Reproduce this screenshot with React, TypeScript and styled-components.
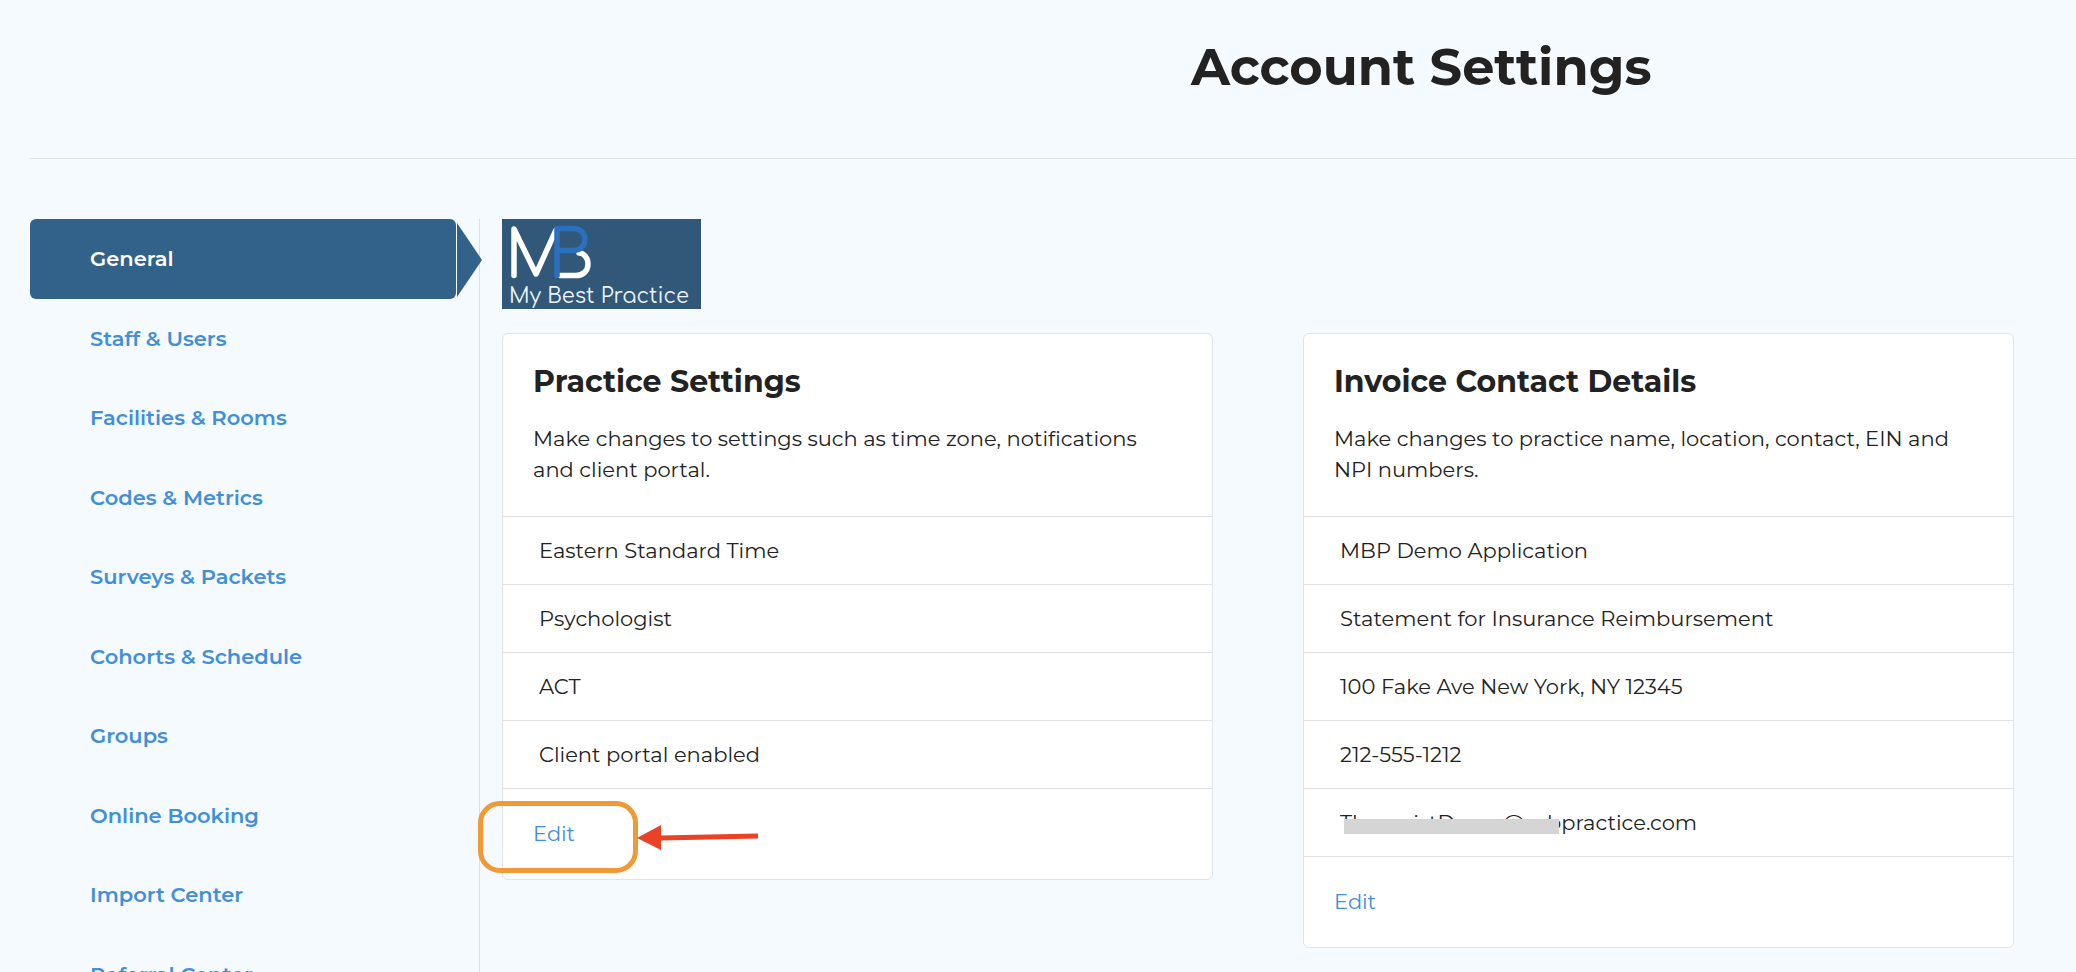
import React from "react";
import styled, { createGlobalStyle } from "styled-components";

const GlobalStyle = createGlobalStyle`
  *, *::before, *::after { box-sizing: border-box; }
  body {
    margin: 0;
    background: #f5faff;
    color: #222;
    font-family: Montserrat, Inter, "Open Sans", sans-serif;
    font-size: 21px;
    line-height: 31px;
  }
`;

const Page = styled.div`
  display: flex;
  flex-direction: column;
  height: 100vh;
  padding-left: 30px;
  overflow: hidden;
`;

const Header = styled.header`
  flex: none;
  padding: 36px 0 60px 36%;
  border-bottom: 1px solid #dee3e8;
  text-align: center;
`;

const PageTitle = styled.h1`
  margin: 0;
  font-size: 51px;
  line-height: 62px;
  font-weight: 700;
`;

const Body = styled.div`
  display: flex;
  flex: 1;
  min-height: 0;
  padding-top: 60px;
`;

const Sidebar = styled.nav`
  flex: none;
  width: 450px;
  padding-right: 23px;
  border-right: 1px solid #d9dfe4;
`;

const NavList = styled.ul`
  display: grid;
  grid-auto-rows: 1fr;
  height: 795px;
  margin: 0;
  padding: 0;
  list-style: none;
`;

const NavItem = styled.li`
  position: relative;
  display: flex;
`;

const NavLink = styled.a<{ $active?: boolean }>`
  display: flex;
  flex: 1;
  align-items: center;
  padding: 0 60px;
  border-radius: 6px;
  background: ${(p) => (p.$active ? "#326289" : "transparent")};
  color: ${(p) => (p.$active ? "#fff" : "#428fd6")};
  font-weight: 600;
  text-decoration: none;
`;

const ActivePointer = styled.svg`
  position: absolute;
  top: 3px;
  left: 100%;
  width: 26px;
  height: 76px;
`;

const Main = styled.main`
  flex: 1;
  min-width: 0;
  padding: 0 62px 24px 22px;
`;

const Logo = styled.svg`
  display: block;
  width: 199px;
  height: 90px;
  margin-bottom: 24px;
`;

const Cards = styled.div`
  display: grid;
  grid-template-columns: 1fr 1fr;
  gap: 90px;
  align-items: start;
`;

const Card = styled.section`
  border: 1px solid #e1e3e5;
  border-radius: 6px;
  background: #fff;
`;

const CardHeader = styled.div`
  padding: 28px 30px 31px;
`;

const CardTitle = styled.h2`
  margin: 0 0 21px;
  font-size: 30px;
  line-height: 40px;
  font-weight: 700;
`;

const CardText = styled.p`
  margin: 0;
`;

const Rows = styled.ul`
  margin: 0;
  padding: 0;
  list-style: none;
`;

const Row = styled.li`
  display: flex;
  align-items: center;
  height: 68px;
  padding: 0 36px;
  border-top: 1px solid #e1e3e5;
`;

const CardFooter = styled.div`
  position: relative;
  height: 91px;
  padding: 29px 30px;
  border-top: 1px solid #e1e3e5;
`;

const EditLink = styled.a`
  color: #428fd6;
  text-decoration: none;
`;

const Redacted = styled.span`
  position: relative;
`;

const RedactionBar = styled.span`
  position: absolute;
  top: 12px;
  left: 4px;
  width: 215px;
  height: 15px;
  background: #d5d5d5;
`;

const Highlight = styled.div`
  position: absolute;
  top: 12px;
  left: -25px;
  width: 160px;
  height: 72px;
  border: 5px solid #f09937;
  border-radius: 22px;
  pointer-events: none;
`;

const Arrow = styled.svg`
  position: absolute;
  top: 34px;
  left: 133px;
  width: 124px;
  height: 28px;
  pointer-events: none;
`;

const navItems = [
  "General",
  "Staff & Users",
  "Facilities & Rooms",
  "Codes & Metrics",
  "Surveys & Packets",
  "Cohorts & Schedule",
  "Groups",
  "Online Booking",
  "Import Center",
  "Referral Center",
];

function PracticeLogo() {
  return (
    <Logo viewBox="0 0 199 90" role="img" aria-label="My Best Practice">
      <rect width="199" height="90" fill="#315879" />
      <g fill="none" strokeLinecap="round" strokeLinejoin="round" strokeWidth="5.5">
        <path d="M12 56.500V10L34 55L54 11" stroke="#fff" />
        <path d="M77 34C82 34 86 39 86 45C86 52 81 56.500 74 56.500H58" stroke="#fff" />
        <path d="M55 56.500V9.500H71C78 9.500 83 14 83 20.500C83 27 78 31.500 71 31.500H57" stroke="#2c6fbc" />
      </g>
      <text x="7" y="84" fill="#eef4f9" fontFamily="Comfortaa, Lato, sans-serif" fontSize="21">
        My Best Practice
      </text>
    </Logo>
  );
}

export default function App() {
  return (
    <>
      <GlobalStyle />
      <Page>
        <Header>
          <PageTitle>Account Settings</PageTitle>
        </Header>
        <Body>
          <Sidebar aria-label="Account settings">
            <NavList>
              {navItems.map((label, i) => (
                <NavItem key={label}>
                  <NavLink href="#" $active={i === 0} aria-current={i === 0 ? "page" : undefined}>
                    {label}
                  </NavLink>
                  {i === 0 && (
                    <ActivePointer viewBox="0 0 26 76" aria-hidden="true">
                      <path d="M1 1L26 38L1 75Z" fill="#326289" />
                    </ActivePointer>
                  )}
                </NavItem>
              ))}
            </NavList>
          </Sidebar>
          <Main>
            <PracticeLogo />
            <Cards>
              <Card>
                <CardHeader>
                  <CardTitle>Practice Settings</CardTitle>
                  <CardText>
                    Make changes to settings such as time zone, notifications and client portal.
                  </CardText>
                </CardHeader>
                <Rows>
                  <Row>Eastern Standard Time</Row>
                  <Row>Psychologist</Row>
                  <Row>ACT</Row>
                  <Row>Client portal enabled</Row>
                </Rows>
                <CardFooter>
                  <EditLink href="#">Edit</EditLink>
                  <Highlight />
                  <Arrow viewBox="0 0 124 28" aria-hidden="true">
                    <path d="M24 15L122 13" stroke="#eb4127" strokeWidth="5" />
                    <path d="M1 15L25 2V27Z" fill="#eb4127" />
                  </Arrow>
                </CardFooter>
              </Card>
              <Card>
                <CardHeader>
                  <CardTitle>Invoice Contact Details</CardTitle>
                  <CardText>
                    Make changes to practice name, location, contact, EIN and NPI numbers.
                  </CardText>
                </CardHeader>
                <Rows>
                  <Row>MBP Demo Application</Row>
                  <Row>Statement for Insurance Reimbursement</Row>
                  <Row>100 Fake Ave New York, NY 12345</Row>
                  <Row>212-555-1212</Row>
                  <Row>
                    <Redacted>
                      TherapistDemo@mbpractice.com
                      <RedactionBar />
                    </Redacted>
                  </Row>
                </Rows>
                <CardFooter>
                  <EditLink href="#">Edit</EditLink>
                </CardFooter>
              </Card>
            </Cards>
          </Main>
        </Body>
      </Page>
    </>
  );
}
